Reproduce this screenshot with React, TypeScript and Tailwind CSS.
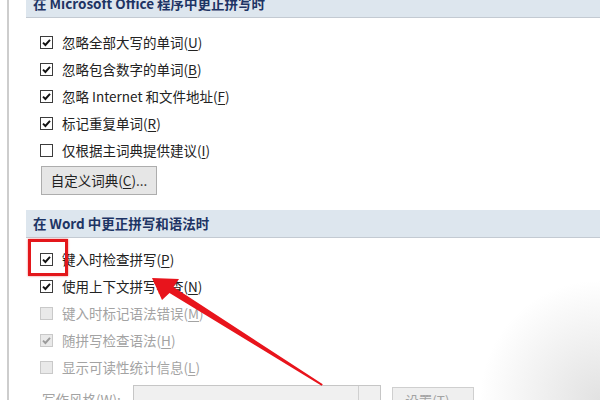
import type { ReactNode } from 'react';

const font = 'font-["Noto_Sans_CJK_SC","Noto_Sans",sans-serif]';

type BoxProps = { checked?: boolean; disabled?: boolean };

const Box = ({ checked, disabled }: BoxProps) => (
  <span
    className={`flex h-[13px] w-[13px] shrink-0 items-center justify-center border ${
      disabled ? 'border-[#c9c9c9] bg-[#e9e9e9]' : 'border-[#3c3c3c] bg-white'
    }`}
  >
    {checked && (
      <svg width="11" height="11" viewBox="0 0 11 11">
        <path
          d="M2 5.6 L4.4 8 L9 2.8"
          fill="none"
          stroke={disabled ? '#9a9a9a' : '#111'}
          strokeWidth="1.9"
        />
      </svg>
    )}
  </span>
);

const Key = ({ label, k, tail = '' }: { label: string; k: string; tail?: string }) => (
  <>
    {label}(<span className="underline underline-offset-2">{k}</span>){tail}
  </>
);

type RowProps = { checked?: boolean; disabled?: boolean; children: ReactNode };

const Row = ({ checked, disabled, children }: RowProps) => (
  <div className="flex h-[27px] items-center gap-[9px] pl-[14px]">
    <Box checked={checked} disabled={disabled} />
    <span className={`text-[13.5px] ${disabled ? 'text-[#a3a3a3]' : 'text-[#222]'}`}>{children}</span>
  </div>
);

const Header = ({ children, className = '' }: { children: ReactNode; className?: string }) => (
  <div
    className={`flex h-[28px] items-center border-b border-[#c3cad2] bg-[#dde6ee] pl-[7px] text-[13.5px] font-bold text-[#1d3464] ${className}`}
  >
    {children}
  </div>
);

export default function App() {
  return (
    <div className={`relative h-[400px] w-[600px] overflow-hidden bg-white ${font}`}>
      <div className="ml-[7px] flow-root h-full border-l-2 border-[#cdcdcd] pl-[17px]">
        <Header className="-mt-[10px]">在 Microsoft Office 程序中更正拼写时</Header>
        <div className="mt-[11px]">
          <Row checked>
            <Key label="忽略全部大写的单词" k="U" />
          </Row>
          <Row checked>
            <Key label="忽略包含数字的单词" k="B" />
          </Row>
          <Row checked>
            <Key label="忽略 Internet 和文件地址" k="F" />
          </Row>
          <Row checked>
            <Key label="标记重复单词" k="R" />
          </Row>
          <Row>
            <Key label="仅根据主词典提供建议" k="I" />
          </Row>
        </div>
        <button className="ml-[15px] mt-[2px] flex h-[29px] w-[116px] items-center justify-center border border-[#adadad] bg-[#e6e6e6] text-[13.5px] text-[#222]">
          <Key label="自定义词典" k="C" tail="..." />
        </button>
        <Header className="mt-[15px]">在 Word 中更正拼写和语法时</Header>
        <div className="mt-[8px]">
          <Row checked>
            <Key label="键入时检查拼写" k="P" />
          </Row>
          <Row checked>
            <Key label="使用上下文拼写检查" k="N" />
          </Row>
          <Row disabled>
            <Key label="键入时标记语法错误" k="M" />
          </Row>
          <Row checked disabled>
            <Key label="随拼写检查语法" k="H" />
          </Row>
          <Row disabled>
            <Key label="显示可读性统计信息" k="L" />
          </Row>
        </div>
        <div className="mt-[4px] flex items-start">
          <span className="ml-[16px] mt-[4px] w-[91px] text-[13.5px] text-[#a3a3a3]">
            <Key label="写作风格" k="W" tail=":" />
          </span>
          <div className="flex h-[26px] w-[248px] border border-[#c6c6c6] bg-[#f0f0f0]">
            <div className="flex-1" />
            <div className="flex w-[22px] items-center justify-center border-l border-[#d0d0d0] text-[10px] text-[#9a9a9a]">
              ⌄
            </div>
          </div>
          <div className="ml-[11px] mt-[2px] flex h-[26px] w-[82px] items-center justify-center border border-[#cfcfcf] bg-[#efefef] text-[13.5px] text-[#a3a3a3]">
            <Key label="设置" k="T" tail="..." />
          </div>
        </div>
      </div>

      <div className="pointer-events-none absolute inset-0 bg-[radial-gradient(circle_at_100%_100%,rgba(190,190,190,0.45),transparent_120px)]" />

      <div className="pointer-events-none absolute left-[28px] top-[239px] h-[37px] w-[40px] border-[3px] border-[#e3171b] shadow-[0_0_2px_rgba(227,23,27,0.6)]" />

      <svg className="pointer-events-none absolute left-0 top-0" width="600" height="400" viewBox="0 0 600 400">
        <polygon
          points="152,278 179,279 173.5,287 322.8,384.3 321.6,385.7 169.5,293 162,300"
          fill="#e8141c"
        />
      </svg>
    </div>
  );
}
